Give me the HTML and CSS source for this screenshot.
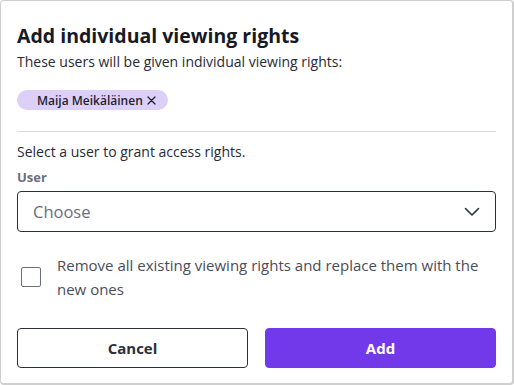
FILE: index.html
```html
<!DOCTYPE html>
<html>
<head>
<meta charset="utf-8">
<link rel="stylesheet" href="styles.css">
</head>
<body>
<div class="dialog">
  <h1 class="title">Add individual viewing rights</h1>
  <p class="intro">These users will be given individual viewing rights:</p>
  <div class="chips">
    <span class="chip">Maija Meikäläinen <svg class="chip-x" width="9" height="9" viewBox="0 0 9 9"><path d="M1 1 L8 8 M8 1 L1 8" stroke="#1f2230" stroke-width="1.3" stroke-linecap="round"/></svg></span>
  </div>
  <hr class="divider">
  <p class="hint">Select a user to grant access rights.</p>
  <label class="label">User</label>
  <div class="select">
    <span class="placeholder">Choose</span>
    <svg class="chev" width="16" height="10" viewBox="0 0 16 10"><path d="M1.5 1.5 L8 8 L14.5 1.5" fill="none" stroke="#2b2f3a" stroke-width="1.6" stroke-linecap="round" stroke-linejoin="round"/></svg>
  </div>
  <div class="check-row">
    <span class="checkbox"></span>
    <span class="check-label">Remove all existing viewing rights and replace them with the new ones</span>
  </div>
  <div class="actions">
    <button class="btn btn-secondary">Cancel</button>
    <button class="btn btn-primary">Add</button>
  </div>
</div>
</body>
</html>
```
FILE: styles.css
```css
html, body {
  margin: 0;
  padding: 0;
  background: #ffffff;
}
body {
  font-family: "Open Sans", "Lato", sans-serif;
  color: #1f2230;
}
.dialog {
  box-sizing: border-box;
  width: 514px;
  height: 385px;
  border: 1px solid #cfcfcf;
  border-right-width: 2px;
  border-bottom-width: 2px;
  border-radius: 4px;
  padding: 21px 16px 0 16px;
}
.title {
  margin: 0;
  font-size: 19.5px;
  font-weight: 700;
  line-height: 28px;
  color: #171a26;
}
.intro {
  margin: 2px 0 0 0;
  font-size: 14px;
  line-height: 20px;
  color: #272a36;
}
.chips {
  margin-top: 18px;
  display: flex;
}
.chip {
  display: inline-flex;
  align-items: center;
  height: 20px;
  padding: 0 12px 0 20px;
  border-radius: 10px;
  background: #ddd0f8;
  font-size: 12px;
  font-weight: 600;
  color: #1f2230;
}
.chip-x {
  margin-left: 4px;
}
.divider {
  margin: 21px 0 0 0;
  border: 0;
  border-top: 1px solid #dcdcdc;
}
.hint {
  margin: 10px 0 0 0;
  font-size: 14px;
  line-height: 20px;
  color: #272a36;
}
.label {
  display: block;
  margin-top: 6px;
  font-size: 13px;
  font-weight: 700;
  line-height: 18px;
  color: #6b6e7b;
}
.select {
  margin-top: 5px;
  box-sizing: border-box;
  height: 41px;
  border: 1px solid #2b2f3a;
  border-radius: 4px;
  display: flex;
  align-items: center;
  justify-content: space-between;
  padding: 0 15px 0 15px;
}
.placeholder {
  font-size: 16.5px;
  color: #6b6e7b;
}
.check-row {
  margin-top: 21px;
  display: flex;
  align-items: center;
  gap: 16px;
  padding-left: 4px;
}
.checkbox {
  flex: none;
  box-sizing: border-box;
  width: 20px;
  height: 20px;
  border: 1.5px solid #6b6e7b;
  border-radius: 2px;
}
.check-label {
  font-size: 15px;
  line-height: 24px;
  color: #4a4d5a;
}
.actions {
  margin-top: 27px;
  display: grid;
  grid-template-columns: 1fr 1fr;
  gap: 17px;
}
.btn {
  height: 40px;
  border-radius: 4px;
  font-family: inherit;
  font-size: 15px;
  font-weight: 700;
}
.btn-secondary {
  background: #ffffff;
  border: 1px solid #2b2f3a;
  color: #2b2f3a;
}
.btn-primary {
  background: #7239ea;
  border: 1px solid #7239ea;
  color: #ffffff;
}
```
